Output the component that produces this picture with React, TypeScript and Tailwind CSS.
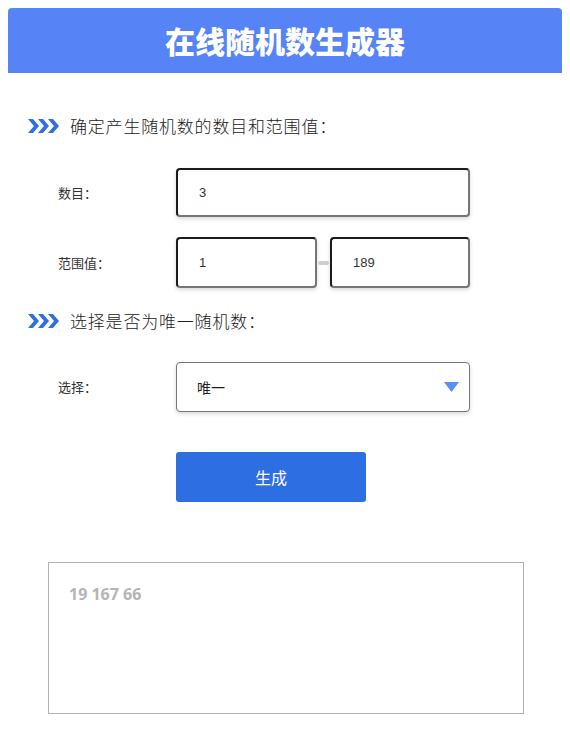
import React from "react";

const cjk = "font-['Noto_Sans_CJK_SC','Noto_Sans',sans-serif]";

function Arrows() {
  return (
    <svg width="32" height="14" viewBox="0 0 32 14" className="shrink-0">
      <polygon points="0,0 5,0 11,7 5,14 0,14 6,7" fill="#2f6fe0" />
      <polygon points="10,0 15,0 21,7 15,14 10,14 16,7" fill="#2f6fe0" />
      <polygon points="20,0 25,0 31,7 25,14 20,14 26,7" fill="#2f6fe0" />
    </svg>
  );
}

function Field({ value, className = "" }: { value: string; className?: string }) {
  return (
    <div
      className={`h-[49px] flex items-center pl-[21px] rounded-[4px] border-2 border-t-[#1b1b1b] border-l-[#1b1b1b] border-r-[#767676] border-b-[#767676] bg-white shadow-[0_2px_4px_rgba(0,0,0,0.15)] text-[13px] text-[#333] font-['Liberation_Sans',sans-serif] ${className}`}
    >
      {value}
    </div>
  );
}

export default function App() {
  return (
    <div className={`w-[570px] min-h-[746px] bg-white px-2 pt-2 ${cjk}`}>
      <div className="h-[65px] bg-[#5683f6] rounded-t-[4px] flex items-center justify-center">
        <h1 className="text-white text-[30px] font-black">在线随机数生成器</h1>
      </div>

      <div className="mt-[42px] ml-[20px] flex items-center gap-[10px] h-[22px]">
        <Arrows />
        <span className="text-[17px] tracking-[0.8px] font-light text-[#222]">确定产生随机数的数目和范围值：</span>
      </div>

      <div className="mt-[31px] flex items-center">
        <span className="w-[168px] pl-[50px] text-[13px] text-[#333]">数目：</span>
        <Field value="3" className="w-[294px]" />
      </div>

      <div className="mt-[20px] flex items-center">
        <span className="w-[168px] pl-[50px] text-[13px] text-[#333]">范围值：</span>
        <Field value="1" className="w-[141px] h-[51px]" />
        <div className="w-[13px] flex justify-center">
          <div className="w-[11px] h-[4px] rounded-full bg-[#cfcfcf]" />
        </div>
        <Field value="189" className="w-[140px] h-[51px]" />
      </div>

      <div className="mt-[22px] ml-[20px] flex items-center gap-[10px] h-[22px]">
        <Arrows />
        <span className="text-[17px] tracking-[0.8px] font-light text-[#222]">选择是否为唯一随机数：</span>
      </div>

      <div className="mt-[30px] flex items-center">
        <span className="w-[168px] pl-[50px] text-[13px] text-[#333]">选择：</span>
        <div className="w-[294px] h-[50px] flex items-center justify-between pl-[20px] pr-[10px] rounded-[4px] border border-[#767676] bg-white shadow-[0_2px_4px_rgba(0,0,0,0.15)]">
          <span className="text-[14px] text-[#222]">唯一</span>
          <svg width="15" height="10" viewBox="0 0 15 10">
            <polygon points="0,0 15,0 7.5,10" fill="#5a8ff5" />
          </svg>
        </div>
      </div>

      <div className="mt-[40px] ml-[168px]">
        <button className="w-[190px] h-[50px] rounded-[3px] bg-[#2d6fe3] text-white text-[16px]">生成</button>
      </div>

      <div className="mt-[60px] ml-[40px] w-[476px] h-[152px] border border-[#b3b3b3] px-[20px] pt-[18px]">
        <span className="text-[16px] font-bold text-[#b5b5b5] font-['Open_Sans',sans-serif]">19 167 66</span>
      </div>
    </div>
  );
}
